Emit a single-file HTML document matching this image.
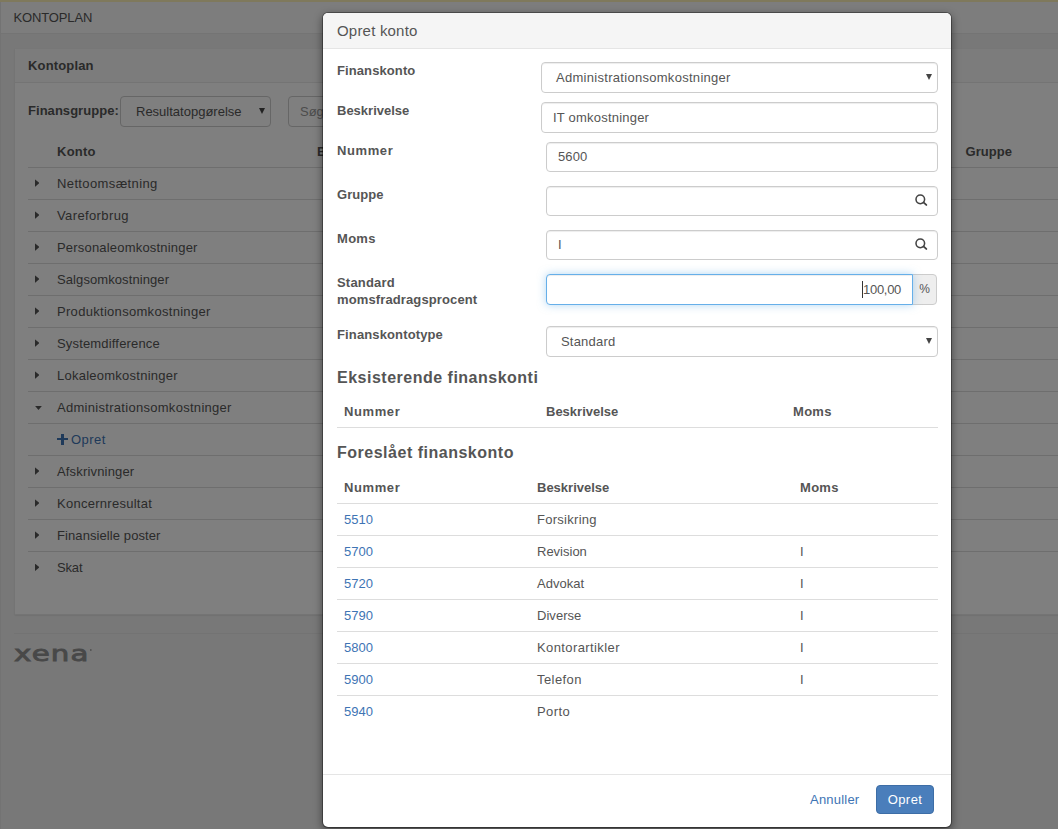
<!DOCTYPE html>
<html lang="da">
<head>
<meta charset="utf-8">
<title>Kontoplan</title>
<style>
*{box-sizing:border-box;margin:0;padding:0}
html,body{width:1058px;height:829px;overflow:hidden}
body{font-family:"Liberation Sans",sans-serif;font-size:13px;color:#555;background:#f0f0f0;position:relative}
th,h3{font-weight:700}
/* ---------- background page ---------- */
#page{position:absolute;left:0;top:0;width:1058px;height:829px;overflow:hidden;background:#f0f0f0}
#gold{position:absolute;left:0;top:0;width:1058px;height:2px;background:#fff3b8}
#lb{position:absolute;left:0;top:0;width:1px;height:829px;background:#e6e6e6}
#topbar{position:absolute;left:1px;top:2px;width:1057px;height:32px;background:#fafafa;border-bottom:1px solid #e9e9e9}
#topbar>span{position:absolute;left:12.5px;top:6px;line-height:20px;font-size:13px;color:#555}
#panel{position:absolute;left:14px;top:48px;width:1100px;height:567px;background:#fff;border:1px solid #e9e9e9;border-top-color:#efefef;border-radius:2px;box-shadow:0 1px 1px rgba(0,0,0,.06)}
#panel .hd{height:34px;background:#f8f8f8;border-bottom:1px solid #e8e8e8;border-radius:2px 2px 0 0;padding:0 13px;line-height:33px;font-weight:700;color:#555}
#fg{position:absolute;left:13px;top:47px;width:600px;height:30px}
#fg label{position:absolute;left:0;top:0;line-height:30px;font-weight:700}
.sel{position:absolute;border:1px solid #ccc;border-radius:4px;background:#fff;height:31px;line-height:30px;white-space:nowrap}
.sel i{position:absolute;right:5px;top:11px;width:0;height:0;border-left:3.5px solid transparent;border-right:3.5px solid transparent;border-top:6px solid #444}
table{border-collapse:collapse;table-layout:fixed}
td,th{height:32px;text-align:left;vertical-align:middle;border-bottom:1px solid #ddd;white-space:nowrap;padding:0}
#tree{position:absolute;left:13px;top:86px;width:1090px}
#tree th{padding-top:2px}
#tree tr.last td{border-bottom:0}
.plus{display:inline-block;position:relative;width:11px;height:11px;margin-right:3px;vertical-align:-1px}
.plus:before{content:"";position:absolute;left:0;top:4px;width:11px;height:2.5px;background:#3e74b4}
.plus:after{content:"";position:absolute;left:4px;top:0;width:2.5px;height:11px;background:#3e74b4}
.cr{display:inline-block;width:4.7px;height:7.6px;background:#555;clip-path:polygon(0 0,100% 50%,0 100%);margin-left:6.8px;position:relative;top:-.6px}
.cd{display:inline-block;width:7.6px;height:4.3px;background:#555;clip-path:polygon(0 0,100% 0,50% 100%);margin-left:6.7px;position:relative;top:-1.6px}
a{color:#3e74b4;text-decoration:none}
#hr{position:absolute;left:14px;top:633px;width:1100px;height:1px;background:#e7e7e7}
#logo{position:absolute;left:14px;top:633.5px;font-family:"DejaVu Sans",sans-serif;font-size:21.5px;line-height:40px;font-weight:400;color:#909090;-webkit-text-stroke:.85px #909090;letter-spacing:.9px;transform-origin:0 50%;transform:scaleX(1.36);white-space:nowrap}
#logo sup{position:absolute;left:55.8px;top:15.6px;width:1.5px;height:2.2px;border-radius:50%;background:#8f8f8f}
#shade{position:absolute;left:0;top:0;width:1058px;height:829px;background:rgba(0,0,0,.5)}
/* ---------- modal ---------- */
#modal{position:absolute;left:322px;top:12px;width:630px;height:816px;background:#fff;background-clip:padding-box;border:1px solid rgba(0,0,0,.33);border-radius:6px;box-shadow:0 3px 9px rgba(0,0,0,.42);overflow:hidden}
#mh{height:36px;background:#f5f5f5;border-bottom:1px solid #e5e5e5;padding-left:14px;font-size:15px;line-height:35px;color:#555}
.lb{position:absolute;left:14px;font-weight:700;line-height:17px;color:#555}
.in{position:absolute;border:1px solid #ccc;border-radius:4px;background:#fff;box-shadow:inset 0 1px 1px rgba(0,0,0,.075);white-space:nowrap;color:#555}
h3{position:absolute;left:14px;font-size:16px;line-height:20px;color:#555}
.t{position:absolute;left:14px;width:601px}
#mf{position:absolute;left:0;top:761px;width:628px;height:53px;border-top:1px solid #e5e5e5}
#btn{position:absolute;left:553px;top:10px;width:58px;height:29px;border:1px solid #3d6da6;border-radius:4px;background:#4a7ebb;color:#fff;text-align:center;line-height:27px}
#ann{position:absolute;left:487px;top:10px;line-height:29px}
.dd{position:absolute;right:5px;top:11px;width:0;height:0;border-left:3.5px solid transparent;border-right:3.5px solid transparent;border-top:6px solid #444}
.sr{position:absolute;right:9px;top:7px;width:14px;height:14px}
.ad{position:absolute;left:589px;top:261px;width:25px;height:31px;border:1px solid #ccc;border-radius:0 4px 4px 0;background:#eee;text-align:center;line-height:29px;font-size:12px;letter-spacing:0;color:#555}
.fc{border-color:#66afe9;border-radius:4px 0 0 4px;box-shadow:inset 0 1px 1px rgba(0,0,0,.075),0 0 8px rgba(102,175,233,.5)}
.cur{display:inline-block;width:1px;height:17px;background:#333;vertical-align:-4px;margin-right:0}
.t th,.t td{padding-left:7px}
.t th{padding-top:2px}
.t tr.last td{border-bottom:0}
</style>
</head>
<body>
<div id="page">
  <div id="lb"></div><div id="gold"></div>
  <div id="topbar"><span><span style="letter-spacing:-0.14px">KONTOPLAN</span></span></div>
  <div id="panel">
    <div class="hd"><span style="letter-spacing:0.15px">Kontoplan</span></div>
    <div id="fg"><label><span style="letter-spacing:0.04px">Finansgruppe:</span></label>
      <div class="sel" style="left:92px;top:0;width:151px;padding-left:15px"><span style="letter-spacing:0.00px">Resultatopgørelse</span><i></i></div>
      <div class="sel" style="left:260px;top:0;width:300px;padding-left:11px;color:#999"><span style="letter-spacing:0.00px">Søg</span></div>
    </div>
    <table id="tree">
      <colgroup><col style="width:29px"><col style="width:260px"><col style="width:647px"><col></colgroup>
      <tr><th></th><th><span style="letter-spacing:0.25px">Konto</span></th><th><span style="letter-spacing:0.00px">Beskrivelse</span></th><th style="padding-left:1.5px"><span style="letter-spacing:0.05px">Gruppe</span></th></tr>
      <tr><td><span class="cr"></span></td><td><span style="letter-spacing:0.38px">Nettoomsætning</span></td><td></td><td></td></tr>
      <tr><td><span class="cr"></span></td><td><span style="letter-spacing:0.38px">Vareforbrug</span></td><td></td><td></td></tr>
      <tr><td><span class="cr"></span></td><td><span style="letter-spacing:0.19px">Personaleomkostninger</span></td><td></td><td></td></tr>
      <tr><td><span class="cr"></span></td><td><span style="letter-spacing:0.09px">Salgsomkostninger</span></td><td></td><td></td></tr>
      <tr><td><span class="cr"></span></td><td><span style="letter-spacing:0.30px">Produktionsomkostninger</span></td><td></td><td></td></tr>
      <tr><td><span class="cr"></span></td><td><span style="letter-spacing:0.17px">Systemdifference</span></td><td></td><td></td></tr>
      <tr><td><span class="cr"></span></td><td><span style="letter-spacing:0.25px">Lokaleomkostninger</span></td><td></td><td></td></tr>
      <tr><td><span class="cd"></span></td><td><span style="letter-spacing:0.29px">Administrationsomkostninger</span></td><td></td><td></td></tr>
      <tr><td></td><td><a><span class="plus"></span><span style="letter-spacing:0.44px">Opret</span></a></td><td></td><td></td></tr>
      <tr><td><span class="cr"></span></td><td><span style="letter-spacing:0.17px">Afskrivninger</span></td><td></td><td></td></tr>
      <tr><td><span class="cr"></span></td><td><span style="letter-spacing:0.27px">Koncernresultat</span></td><td></td><td></td></tr>
      <tr><td><span class="cr"></span></td><td><span style="letter-spacing:0.09px">Finansielle poster</span></td><td></td><td></td></tr>
      <tr class="last"><td><span class="cr"></span></td><td><span style="letter-spacing:-0.17px">Skat</span></td><td></td><td></td></tr>
    </table>
  </div>
  <div id="hr"></div>
  <div id="logo">xena<sup></sup></div>
</div>
<div id="shade"></div>
<div id="modal">
  <div id="mh"><span style="letter-spacing:0.20px">Opret konto</span></div>
  <div class="lb" style="top:49px"><span style="letter-spacing:0.10px">Finanskonto</span></div>
  <div class="in" style="left:218px;top:49px;width:397px;height:31px;line-height:29px;padding-left:14px"><span style="letter-spacing:0.29px">Administrationsomkostninger</span><i class="dd"></i></div>
  <div class="lb" style="top:89px"><span style="letter-spacing:0.00px">Beskrivelse</span></div>
  <div class="in" style="left:218px;top:89px;width:397px;height:31px;line-height:29px;padding-left:11px"><span style="letter-spacing:0.21px">IT omkostninger</span></div>
  <div class="lb" style="top:129px"><span style="letter-spacing:0.60px">Nummer</span></div>
  <div class="in" style="left:223px;top:129px;width:392px;height:30px;line-height:28px;padding-left:11px"><span style="letter-spacing:0.12px">5600</span></div>
  <div class="lb" style="top:173px"><span style="letter-spacing:0.05px">Gruppe</span></div>
  <div class="in" style="left:223px;top:173px;width:392px;height:30px"><svg class="sr" viewBox="0 0 14 14"><circle cx="6.3" cy="5.35" r="4.3" fill="none" stroke="#444" stroke-width="1.55"/><path d="M9.5 8.4L12.3 10.9" stroke="#444" stroke-width="1.9" stroke-linecap="round"/></svg></div>
  <div class="lb" style="top:217px"><span style="letter-spacing:0.30px">Moms</span></div>
  <div class="in" style="left:223px;top:217px;width:392px;height:30px;line-height:28px;padding-left:11px"><span style="letter-spacing:0.00px">I</span><svg class="sr" viewBox="0 0 14 14"><circle cx="6.3" cy="5.35" r="4.3" fill="none" stroke="#444" stroke-width="1.55"/><path d="M9.5 8.4L12.3 10.9" stroke="#444" stroke-width="1.9" stroke-linecap="round"/></svg></div>
  <div class="lb" style="top:261px"><span style="letter-spacing:0.20px">Standard</span><br><span style="letter-spacing:0.12px">momsfradragsprocent</span></div>
  <div class="ad">%</div>
  <div class="in fc" style="left:223px;top:261px;width:367px;height:31px;line-height:29px;padding-right:11px;text-align:right"><span class="cur"></span><span style="letter-spacing:-0.30px">100,00</span></div>
  <div class="lb" style="top:313px"><span style="letter-spacing:0.13px">Finanskontotype</span></div>
  <div class="in" style="left:223px;top:313px;width:392px;height:31px;line-height:29px;padding-left:14px"><span style="letter-spacing:0.20px">Standard</span><i class="dd"></i></div>
  <h3 style="top:355px"><span style="letter-spacing:0.50px">Eksisterende finanskonti</span></h3>
  <table class="t" style="top:382px">
    <colgroup><col style="width:202px"><col style="width:247px"><col></colgroup>
    <tr><th><span style="letter-spacing:0.60px">Nummer</span></th><th><span style="letter-spacing:0.00px">Beskrivelse</span></th><th><span style="letter-spacing:0.30px">Moms</span></th></tr>
  </table>
  <h3 style="top:430px"><span style="letter-spacing:0.51px">Foreslået finanskonto</span></h3>
  <table class="t" style="top:458px">
    <colgroup><col style="width:193px"><col style="width:263px"><col></colgroup>
    <tr><th><span style="letter-spacing:0.60px">Nummer</span></th><th><span style="letter-spacing:0.00px">Beskrivelse</span></th><th><span style="letter-spacing:0.30px">Moms</span></th></tr>
    <tr><td><a><span style="letter-spacing:0.00px">5510</span></a></td><td><span style="letter-spacing:0.28px">Forsikring</span></td><td></td></tr>
    <tr><td><a><span style="letter-spacing:0.00px">5700</span></a></td><td><span style="letter-spacing:0.00px">Revision</span></td><td>I</td></tr>
    <tr><td><a><span style="letter-spacing:0.00px">5720</span></a></td><td><span style="letter-spacing:0.04px">Advokat</span></td><td>I</td></tr>
    <tr><td><a><span style="letter-spacing:0.00px">5790</span></a></td><td><span style="letter-spacing:0.04px">Diverse</span></td><td>I</td></tr>
    <tr><td><a><span style="letter-spacing:0.00px">5800</span></a></td><td><span style="letter-spacing:0.40px">Kontorartikler</span></td><td>I</td></tr>
    <tr><td><a><span style="letter-spacing:0.00px">5900</span></a></td><td><span style="letter-spacing:0.42px">Telefon</span></td><td>I</td></tr>
    <tr class="last"><td><a><span style="letter-spacing:0.00px">5940</span></a></td><td><span style="letter-spacing:0.44px">Porto</span></td><td></td></tr>
  </table>
  <div id="mf"><a id="ann"><span style="letter-spacing:0.21px">Annuller</span></a><div id="btn"><span style="letter-spacing:0.44px">Opret</span></div></div>
</div>
</body>
</html>
